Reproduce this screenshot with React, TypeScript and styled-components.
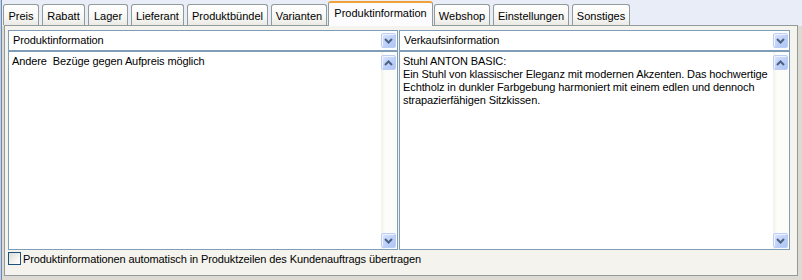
import styled, { createGlobalStyle } from "styled-components";

const GlobalStyle = createGlobalStyle`
  html, body {
    margin: 0;
    padding: 0;
    background: #dcdad3;
  }
  body {
    font-family: "Liberation Sans", Arial, sans-serif;
    font-size: 11px;
    letter-spacing: -0.1px;
    color: #000;
  }
`;

const Window = styled.div`
  width: 802px;
  height: 280px;
  background: linear-gradient(#e8edf8 0, #e8edf8 26px, #dcdad3 26px);
  box-shadow: inset 1px 0 0 #c7cfdd, inset 2px 0 0 #6d88bb;
  display: flex;
  flex-direction: column;
  overflow: hidden;
`;

const TabStrip = styled.div`
  height: 25px;
  display: flex;
  align-items: flex-end;
  gap: 3px;
  padding-left: 3px;
  position: relative;
  z-index: 1;
`;

const Tab = styled.div<{ $width: number; $active?: boolean }>`
  width: ${(p) => p.$width}px;
  box-sizing: border-box;
  height: ${(p) => (p.$active ? 25 : 21)}px;
  margin: ${(p) => (p.$active ? "0 -2px -1px -2px" : "0")};
  display: flex;
  align-items: center;
  justify-content: center;
  padding-top: ${(p) => (p.$active ? 0 : 1)}px;
  padding-bottom: ${(p) => (p.$active ? 3 : 0)}px;
  border: 1px solid #919b9c;
  border-bottom: none;
  border-top: ${(p) => (p.$active ? "2px solid #f0a238" : "1px solid #919b9c")};
  border-radius: 3px 3px 0 0;
  background: ${(p) =>
    p.$active
      ? "#fcfcfe"
      : "linear-gradient(#ffffff, #f7f7f4 60%, #ebeae5)"};
  white-space: nowrap;
  letter-spacing: 0;
  cursor: default;
`;

const Panel = styled.div`
  margin-left: 4px;
  width: 794px;
  height: 251px;
  box-sizing: border-box;
  border: 1px solid #919b9c;
  background: #f4f3ee;
  padding: 4px 7px 0 3px;
  display: flex;
  flex-direction: column;
`;

const Columns = styled.div`
  display: grid;
  grid-template-columns: 390px 391px;
  gap: 1px;
`;

const Column = styled.div`
  display: flex;
  flex-direction: column;
`;

const Header = styled.div`
  height: 21px;
  box-sizing: border-box;
  border: 1px solid #7f9db9;
  background: #fff;
  display: flex;
  align-items: center;
  padding: 0 1px 0 4px;
`;

const HeaderLabel = styled.span`
  flex: 1;
  line-height: 13px;
`;

const BlueButton = styled.div`
  width: 15px;
  height: 15px;
  box-sizing: border-box;
  border: 1px solid #bdcef5;
  border-radius: 2px;
  background: linear-gradient(135deg, #dbe5fd, #bccff8 60%, #b0c5f5);
  box-shadow: inset 1px 1px 0 #eef3fe;
  display: flex;
  align-items: center;
  justify-content: center;
`;

const TextBox = styled.div`
  height: 199px;
  box-sizing: border-box;
  border: 1px solid #7f9db9;
  background: #fff;
  display: flex;
`;

const TextContent = styled.div`
  flex: 1;
  padding: 3px 4px 0 3px;
  line-height: 13px;
  white-space: pre;
`;

const ScrollBar = styled.div`
  width: 15px;
  margin-right: 1px;
  display: flex;
  flex-direction: column;
  justify-content: space-between;
  padding: 3px 0 1px;
  background: linear-gradient(90deg, #f3f1ea, #fdfdfa 30%, #fbfbf7);
`;

const CheckRow = styled.label`
  margin-top: 2px;
  display: flex;
  align-items: center;
  gap: 2px;
  height: 13px;
`;

const CheckBox = styled.span`
  width: 13px;
  height: 13px;
  box-sizing: border-box;
  border: 1px solid #1c5180;
  background: linear-gradient(135deg, #dcdcd6, #f4f4f0 60%, #ffffff);
`;

const Chevron = ({ up }: { up?: boolean }) => (
  <svg width="9" height="6" viewBox="0 0 9 6">
    <polyline
      points={up ? "1,5 4.5,1.5 8,5" : "1,1 4.5,4.5 8,1"}
      fill="none"
      stroke="#4d6185"
      strokeWidth="2"
    />
  </svg>
);

const tabs = [
  { label: "Preis", width: 36 },
  { label: "Rabatt", width: 43 },
  { label: "Lager", width: 40 },
  { label: "Lieferant", width: 53 },
  { label: "Produktbündel", width: 81 },
  { label: "Varianten", width: 56 },
  { label: "Produktinformation", width: 105 },
  { label: "Webshop", width: 56 },
  { label: "Einstellungen", width: 76 },
  { label: "Sonstiges", width: 58 },
];

const columns = [
  {
    title: "Produktinformation",
    text: "Andere  Bezüge gegen Aufpreis möglich",
  },
  {
    title: "Verkaufsinformation",
    text:
      "Stuhl ANTON BASIC:\n" +
      "Ein Stuhl von klassischer Eleganz mit modernen Akzenten. Das hochwertige\n" +
      "Echtholz in dunkler Farbgebung harmoniert mit einem edlen und dennoch\n" +
      "strapazierfähigen Sitzkissen.",
  },
];

function App() {
  const active = "Produktinformation";
  return (
    <>
      <GlobalStyle />
      <Window>
        <TabStrip>
          {tabs.map((t) => (
            <Tab key={t.label} $width={t.width} $active={t.label === active}>
              {t.label}
            </Tab>
          ))}
        </TabStrip>
        <Panel>
          <Columns>
            {columns.map((c) => (
              <Column key={c.title}>
                <Header>
                  <HeaderLabel>{c.title}</HeaderLabel>
                  <BlueButton>
                    <Chevron />
                  </BlueButton>
                </Header>
                <TextBox>
                  <TextContent>{c.text}</TextContent>
                  <ScrollBar>
                    <BlueButton>
                      <Chevron up />
                    </BlueButton>
                    <BlueButton>
                      <Chevron />
                    </BlueButton>
                  </ScrollBar>
                </TextBox>
              </Column>
            ))}
          </Columns>
          <CheckRow>
            <CheckBox />
            <span>
              Produktinformationen automatisch in Produktzeilen des
              Kundenauftrags übertragen
            </span>
          </CheckRow>
        </Panel>
      </Window>
    </>
  );
}

export default App;
